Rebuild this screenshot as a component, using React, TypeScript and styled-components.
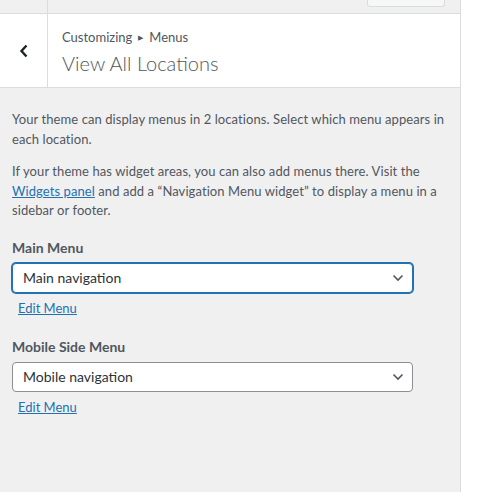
import React from 'react';
import styled, { createGlobalStyle } from 'styled-components';

const GlobalStyle = createGlobalStyle`
  html, body {
    margin: 0;
    padding: 0;
    background: #FFFFFF;
  }
  * {
    box-sizing: border-box;
  }
`;

const Sidebar = styled.div`
  width: 461px;
  height: 492px;
  background: #F0F0F1;
  border-right: 1px solid #DCDCDE;
  font-family: Lato, "Liberation Sans", Arial, sans-serif;
  color: #50575E;
  overflow: hidden;
`;

const TopBar = styled.div`
  height: 14px;
  display: flex;
  border-bottom: 1px solid #DCDCDE;
`;

const TopCell = styled.div`
  width: 48px;
  border-right: 1px solid #DCDCDE;
`;

const Spacer = styled.div`
  flex: 1;
`;

const TopButton = styled.div`
  width: 78px;
  height: 7px;
  margin-right: 15px;
  background: #F6F7F7;
  border: 1px solid #DCDCDE;
  border-top: none;
  border-radius: 0 0 3px 3px;
`;

const Header = styled.div`
  height: 74px;
  display: flex;
  background: #FFFFFF;
  border-bottom: 1px solid #DCDCDE;
`;

const BackButton = styled.div`
  width: 48px;
  display: flex;
  align-items: center;
  justify-content: center;
  border-right: 1px solid #DCDCDE;
  color: #1D2327;
`;

const TitleBlock = styled.div`
  padding: 14px 0 0 14px;
`;

const Breadcrumb = styled.div`
  font-size: 13px;
  line-height: 18px;
  display: flex;
  align-items: center;
  gap: 6px;
`;

const Arrow = styled.span`
  font-size: 7px;
`;

const Title = styled.div`
  font-size: 20px;
  font-weight: 300;
  line-height: 28px;
  margin-top: 3px;
`;

const Content = styled.div`
  padding: 22px 12px 12px;
`;

const Description = styled.p`
  margin: 0 0 13px;
  font-size: 13px;
  line-height: 19.5px;
  letter-spacing: 0.08px;
`;

const Link = styled.a`
  color: #2271B1;
  text-decoration: underline;
`;

const FieldList = styled.div`
  margin-top: 17px;
  display: flex;
  flex-direction: column;
  gap: 20px;
`;

const Field = styled.div``;

const Label = styled.div`
  font-size: 14px;
  font-weight: 700;
  line-height: 20px;
  margin-bottom: 5px;
`;

const Select = styled.div<{ focused?: boolean }>`
  width: 401px;
  height: 30px;
  display: flex;
  align-items: center;
  justify-content: space-between;
  padding: 0 8px 0 10px;
  background: #FFFFFF;
  border: 1px solid ${p => (p.focused ? '#2271B1' : '#8C8F94')};
  box-shadow: ${p => (p.focused ? '0 0 0 1px #2271B1' : 'none')};
  border-radius: 4px;
  font-size: 14px;
  color: #2C3338;
`;

const EditLink = styled(Link)`
  display: inline-block;
  font-size: 13px;
  line-height: 18px;
  margin: 6px 0 0 6px;
`;

const Chevron = () => (
  <svg width="12" height="8" viewBox="0 0 12 8">
    <path d="M1.5 1.5 L6 6 L10.5 1.5" fill="none" stroke="#50575E" strokeWidth="1.6" />
  </svg>
);

const BackIcon = () => (
  <svg width="10" height="14" viewBox="0 0 10 14">
    <path d="M7.5 1.5 L2.5 7 L7.5 12.5" fill="none" stroke="#1D2327" strokeWidth="2.4" />
  </svg>
);

const locations = [
  { label: 'Main Menu', value: 'Main navigation', focused: true },
  { label: 'Mobile Side Menu', value: 'Mobile navigation', focused: false },
];

export default function App() {
  return (
    <>
      <GlobalStyle />
      <Sidebar>
        <TopBar>
          <TopCell />
          <Spacer />
          <TopButton />
        </TopBar>
        <Header>
          <BackButton>
            <BackIcon />
          </BackButton>
          <TitleBlock>
            <Breadcrumb>
              Customizing <Arrow>▶</Arrow> Menus
            </Breadcrumb>
            <Title>View All Locations</Title>
          </TitleBlock>
        </Header>
        <Content>
          <Description>
            Your theme can display menus in 2 locations. Select which menu appears in each location.
          </Description>
          <Description>
            If your theme has widget areas, you can also add menus there. Visit the{' '}
            <Link href="#">Widgets panel</Link> and add a “Navigation Menu widget” to display a menu in a
            sidebar or footer.
          </Description>
          <FieldList>
            {locations.map(loc => (
              <Field key={loc.label}>
                <Label>{loc.label}</Label>
                <Select focused={loc.focused}>
                  {loc.value}
                  <Chevron />
                </Select>
                <EditLink href="#">Edit Menu</EditLink>
              </Field>
            ))}
          </FieldList>
        </Content>
      </Sidebar>
    </>
  );
}
